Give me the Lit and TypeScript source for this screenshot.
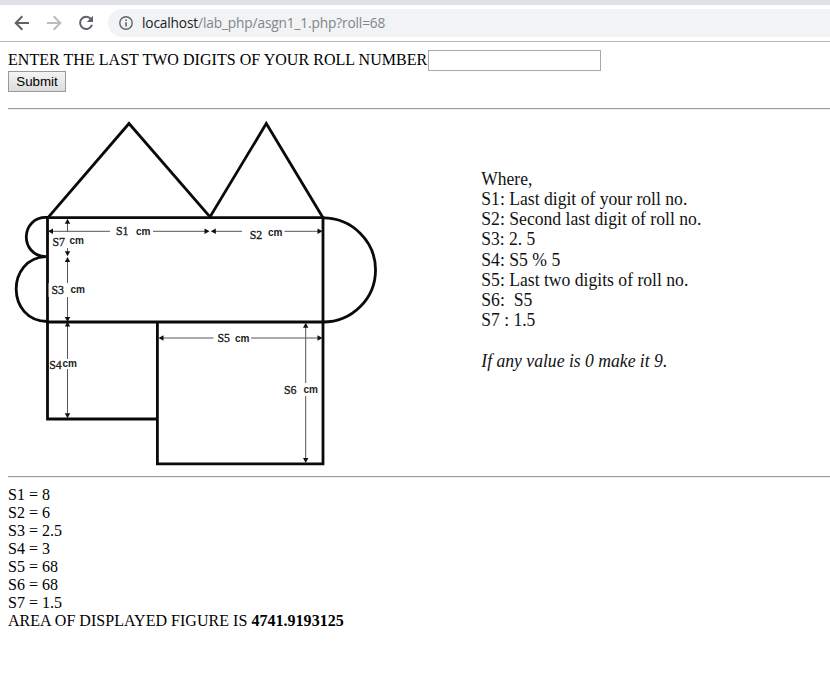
import { LitElement, html, svg, css } from "lit";
import { customElement } from "lit/decorators.js";

const NOTES: [number, string, number][] = [
  [184.5, "Where,", 51],
  [204.8, "S1: Last digit of your roll no.", 206],
  [225, "S2: Second last digit of roll no.", 220],
  [245.3, "S3: 2. 5", 54],
  [265.5, "S4: S5 % 5", 79],
  [285.8, "S5: Last two digits of roll no.", 207],
  [306, "S6:\u00a0 S5", 51],
  [326.3, "S7 : 1.5", 54],
];

const RESULTS: [string, string][] = [
  ["S1", "8"], ["S2", "6"], ["S3", "2.5"], ["S4", "3"],
  ["S5", "68"], ["S6", "68"], ["S7", "1.5"],
];

// name, x, baseline, "cm" x, "cm" baseline
const LABELS: [string, number, number, number, number][] = [
  ["S1", 116, 235, 136, 234.5],
  ["S2", 249.8, 239, 268, 235.5],
  ["S7", 52.5, 245.5, 69.5, 243.7],
  ["S3", 51.5, 293.8, 70.5, 293],
  ["S4", 49.3, 369.2, 62.5, 367],
  ["S5", 217.5, 341.5, 235, 341.8],
  ["S6", 284, 394, 303.5, 392.8],
];

// dimension lines: x1, y1, x2, y2
const DIMS = [
  [50, 231.3, 110, 231.3], [153, 231.3, 208, 231.3],
  [212, 231.3, 242, 231.3], [284.5, 231.3, 321, 231.3],
  [67.5, 221, 67.5, 232], [67.5, 248, 67.5, 254],
  [67.5, 259, 67.5, 283], [67.5, 297, 67.5, 320],
  [67.5, 323, 67.5, 359], [67.5, 369, 67.5, 417],
  [160, 338, 213.5, 338], [251, 338, 320, 338],
  [305.7, 325, 305.7, 383], [305.7, 396, 305.7, 461],
];

// arrow heads: tip x, tip y, rotation (0 points right)
const HEADS = [
  [48, 231.3, 180], [209.5, 231.3, 0], [210.8, 231.3, 180], [322.5, 231.3, 0],
  [67.5, 218.7, -90], [67.5, 256.2, 90], [67.5, 257, -90], [67.5, 322, 90],
  [67.5, 321.5, -90], [67.5, 418.2, 90], [158.5, 338, 180], [322.5, 338, 0],
  [305.7, 322.8, -90], [305.7, 463, 90],
];

@customElement("app-toolbar")
class AppToolbar extends LitElement {
  static styles = css`
    :host { display: block; border-top: 5px solid #dee1e6; border-bottom: 1px solid #b6b5b6; height: 36px; background: #fff; }
    .bar { display: flex; align-items: center; height: 36px; padding-left: 14px; }
    .nav { display: block; width: 16px; height: 16px; margin-right: 16px; }
    .omni { display: flex; align-items: center; flex: 1; height: 28px; background: #f1f3f4; border-radius: 14px 0 0 14px; padding-left: 10px; margin-left: -2px; box-sizing: border-box; }
    .info { display: block; width: 16px; height: 16px; margin-right: 8px; }
    .url { font: 13.7px/20px "Open Sans", "Noto Sans", sans-serif; color: #80868b; white-space: nowrap; letter-spacing: -0.14px; }
    .host { color: #202124; }
  `;
  render() {
    return html`<div class="bar">
      <svg class="nav" viewBox="0 0 16 16" fill="none" stroke="#5f6368" stroke-width="2"><path d="M15 8H2.3M8.3 1.3L1.7 8l6.6 6.7"/></svg>
      <svg class="nav" viewBox="0 0 16 16" fill="none" stroke="#babcbe" stroke-width="2"><path d="M1 8h12.7M7.7 1.3L14.3 8l-6.6 6.7"/></svg>
      <svg class="nav" viewBox="0 0 16 16"><path d="M13 4.1A6.1 6.1 0 1 0 14 9.8" fill="none" stroke="#5f6368" stroke-width="2"/><path d="M15 .8V7H8.8z" fill="#5f6368"/></svg>
      <div class="omni">
        <svg class="info" viewBox="0 0 16 16"><circle cx="8" cy="8" r="6.2" fill="none" stroke="#5f6368" stroke-width="1.4"/><path d="M7.2 4.4h1.6V6H7.2zM7.2 7.2h1.6v4.3H7.2z" fill="#5f6368"/></svg>
        <span class="url"><span class="host">localhost</span>/lab_php/asgn1_1.php?roll=68</span>
      </div>
    </div>`;
  }
}

@customElement("area-figure")
class AreaFigure extends LitElement {
  static styles = css`
    :host { display: block; height: 366px; }
    .figure { display: block; width: 822px; height: 366px; }
    .outline { fill: none; stroke: #0a0a0a; stroke-width: 2.8; }
    .dim { stroke: #555; stroke-width: 1; }
    .head { fill: #111; }
    .name { font: 12px "Liberation Serif", serif; fill: #222; stroke: #222; stroke-width: 0.35; }
    .unit { font: bold 10.5px "Liberation Sans", sans-serif; fill: #222; }
    .note { font: 18px "Liberation Serif", serif; fill: #111; white-space: pre; }
    .hint { font-style: italic; }
  `;
  render() {
    return html`<svg class="figure" viewBox="8 110 822 366">
      <g class="outline">
        <path d="M48 217.7L129 123.5 210 217L266.3 123.5 323 217.7"/>
        <path d="M47.5 217.7H323V322H47.5z"/>
        <path d="M47.5 322V419H157.4M157.4 322V463.8H323V322"/>
        <path d="M323 217.9A52.5 52 0 0 1 323 322"/>
        <path d="M47.5 217.5C20 216 19 256 46 256.6C6 258 6 321 47.5 321.5"/>
      </g>
      <rect x="48.6" y="283" width="2" height="14" fill="#fff"/>
      ${DIMS.map(([a, b, c, d]) => svg`<line class="dim" x1=${a} y1=${b} x2=${c} y2=${d} />`)}
      ${HEADS.map(([x, y, r]) => svg`<path class="head" d="M0 0L-5 -2.7V2.7z" transform="translate(${x} ${y}) rotate(${r})" />`)}
      ${LABELS.map(([n, x, y, cx, cy]) => svg`
        <text class="name" x=${x} y=${y} textLength="12.5" lengthAdjust="spacingAndGlyphs">${n}</text>
        <text class="unit" x=${cx} y=${cy} textLength="14.5" lengthAdjust="spacingAndGlyphs">cm</text>`)}
      ${NOTES.map(([y, t, w]) => svg`<text class="note" x="481.3" y=${y} textLength=${w} lengthAdjust="spacingAndGlyphs">${t}</text>`)}
      <text class="note hint" x="481.3" y="367" textLength="186" lengthAdjust="spacingAndGlyphs">If any value is 0 make it 9.</text>
    </svg>`;
  }
}

@customElement("app-root")
class AppRoot extends LitElement {
  static styles = css`
    :host { display: block; width: 100%; height: 683px; overflow: hidden; background: #fff; color: #000; font: 16px/18px "Liberation Serif", serif; }
    .page { padding: 8px 0 0 8px; }
    .row { display: flex; align-items: center; height: 21px; }
    .prompt { width: 420px; white-space: nowrap; letter-spacing: 0.04px; padding-bottom: 2px; }
    .field { box-sizing: border-box; width: 173px; height: 21px; border: 1px solid #a9a9a9; border-radius: 0; padding: 1px; margin: 0; background: #fff; }
    .submit { display: block; box-sizing: border-box; width: 58px; height: 21px; padding: 0; border: 1px solid #9a9a9a; border-radius: 0; background: linear-gradient(#f4f4f4, #dcdcdc); color: #000; font: 13.33px/17px "Liberation Sans", sans-serif; }
    .rule { height: 1px; border-top: 1px solid #9a9a9a; background: #eee; }
    .first { margin-top: 16px; }
    .results { padding-top: 8px; }
    .line { height: 18px; white-space: nowrap; }
    .total { letter-spacing: 0.03px; }
  `;
  render() {
    return html`<app-toolbar></app-toolbar>
      <div class="page">
        <div class="row"><span class="prompt">ENTER THE LAST TWO DIGITS OF YOUR ROLL NUMBER</span><input class="field" type="text" /></div>
        <button class="submit">Submit</button>
        <div class="rule first"></div>
        <area-figure></area-figure>
        <div class="rule"></div>
        <div class="results">
          ${RESULTS.map(([k, v]) => html`<div class="line">${k} = ${v}</div>`)}
          <div class="line total">AREA OF DISPLAYED FIGURE IS <b>4741.9193125</b></div>
        </div>
      </div>`;
  }
}
